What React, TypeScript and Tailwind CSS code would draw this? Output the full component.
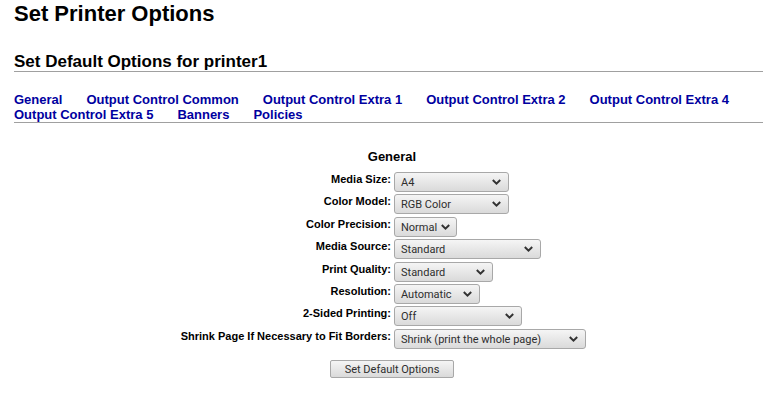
import React from 'react';

const tabs = [
  'General',
  'Output Control Common',
  'Output Control Extra 1',
  'Output Control Extra 2',
  'Output Control Extra 4',
  'Output Control Extra 5',
  'Banners',
  'Policies',
];

const options: { label: string; value: string; width: string }[] = [
  { label: 'Media Size:', value: 'A4', width: 'w-[115px]' },
  { label: 'Color Model:', value: 'RGB Color', width: 'w-[115px]' },
  { label: 'Color Precision:', value: 'Normal', width: 'w-[63px]' },
  { label: 'Media Source:', value: 'Standard', width: 'w-[147px]' },
  { label: 'Print Quality:', value: 'Standard', width: 'w-[99px]' },
  { label: 'Resolution:', value: 'Automatic', width: 'w-[86px]' },
  { label: '2-Sided Printing:', value: 'Off', width: 'w-[128px]' },
  { label: 'Shrink Page If Necessary to Fit Borders:', value: 'Shrink (print the whole page)', width: 'w-[192px]' },
];

function Chevron() {
  return (
    <svg width="9" height="6" viewBox="0 0 9 6" className="shrink-0">
      <polyline points="0.8,1 4.5,4.6 8.2,1" fill="none" stroke="#333" strokeWidth="2" />
    </svg>
  );
}

function FakeSelect({ value, width }: { value: string; width: string }) {
  return (
    <div
      className={`${width} h-[20px] flex items-center justify-between gap-1 pl-[6px] pr-[7px] border border-[#a8a8a8] rounded-[3px] bg-linear-to-b from-[#f5f5f5] to-[#dadada] text-[11px] text-[#2e2e2e] font-['Roboto',sans-serif]`}
    >
      <span className="whitespace-nowrap leading-none pt-[1px]">{value}</span>
      <Chevron />
    </div>
  );
}

export default function App() {
  return (
    <div className="min-h-screen bg-white pl-[14px] text-black font-['Liberation_Sans',Arial,sans-serif]">
      <h1 className="mt-[1px] text-[22px] leading-[26px] font-bold">Set Printer Options</h1>

      <h2 className="mt-[25px] text-[17px] leading-[19px] font-bold border-b border-[#a0a0a0]">
        Set Default Options for printer1
      </h2>

      <div className="mt-[20px] flex flex-wrap gap-x-6 border-b border-[#a0a0a0]">
        {tabs.map((t) => (
          <a key={t} href="#" className="text-[13px] leading-[15px] font-bold text-[#0000a0] whitespace-nowrap">
            {t}
          </a>
        ))}
      </div>

      <div className="pl-[7px] flex flex-col items-center">
        <div className="mt-[26px] text-[13px] leading-[15px] font-bold">General</div>

        <div className="mt-[8px] grid grid-cols-[213px_212px] gap-x-[3px]">
          {options.map((o) => (
            <React.Fragment key={o.label}>
              <div className="h-[22.4px] pt-[1px] text-right text-[11px] leading-[13px] font-bold whitespace-nowrap">
                {o.label}
              </div>
              <div className="h-[22.4px]">
                <FakeSelect value={o.value} width={o.width} />
              </div>
            </React.Fragment>
          ))}
        </div>

        <button className="mt-[9px] w-[124px] h-[18px] border border-[#a8a8a8] rounded-[2px] bg-linear-to-b from-[#f5f5f5] to-[#dadada] text-[11px] leading-none text-[#2e2e2e] font-['Roboto',sans-serif]">
          Set Default Options
        </button>
      </div>
    </div>
  );
}
